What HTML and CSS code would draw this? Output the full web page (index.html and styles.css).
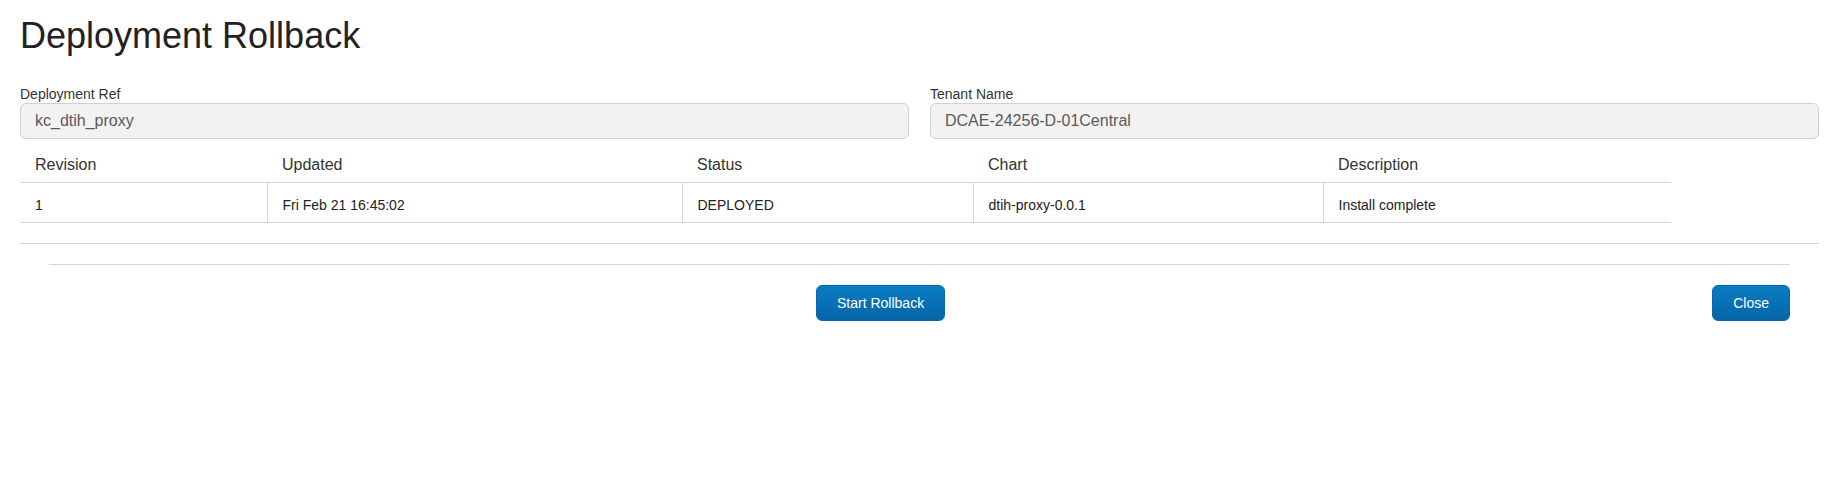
FILE: index.html
```html
<!DOCTYPE html>
<html lang="en">
<head>
<meta charset="utf-8">
<title>Deployment Rollback</title>
<link rel="stylesheet" href="styles.css">
</head>
<body>
<div class="page">
  <h1 class="title">Deployment Rollback</h1>
  <div class="fields">
    <div class="field">
      <label class="field-label">Deployment Ref</label>
      <div class="field-input">kc_dtih_proxy</div>
    </div>
    <div class="field">
      <label class="field-label">Tenant Name</label>
      <div class="field-input">DCAE-24256-D-01Central</div>
    </div>
  </div>
  <table class="revisions">
    <colgroup>
      <col class="c1"><col class="c2"><col class="c3"><col class="c4"><col class="c5">
    </colgroup>
    <thead>
      <tr><th>Revision</th><th>Updated</th><th>Status</th><th>Chart</th><th>Description</th></tr>
    </thead>
    <tbody>
      <tr><td>1</td><td>Fri Feb 21 16:45:02</td><td>DEPLOYED</td><td>dtih-proxy-0.0.1</td><td>Install complete</td></tr>
    </tbody>
  </table>
  <div class="divider"></div>
  <div class="footer">
    <div class="footer-center">
      <button class="btn">Start Rollback</button>
    </div>
    <button class="btn">Close</button>
  </div>
</div>
</body>
</html>
```
FILE: styles.css
```css
* { box-sizing: border-box; }
html, body { margin: 0; padding: 0; background: #fff; }
body {
  font-family: "Liberation Sans", Arial, sans-serif;
  color: #333;
}
.page { padding: 0 20px; }
.title {
  margin: 16px 0 0;
  font-size: 36px;
  line-height: 40px;
  font-weight: normal;
  color: #222;
}
.fields {
  margin-top: 29px;
  display: grid;
  grid-template-columns: 1fr 1fr;
  column-gap: 21px;
}
.field-label {
  display: block;
  font-size: 14px;
  line-height: 18px;
  color: #333;
}
.field-input {
  height: 36px;
  border: 1px solid #d0d0d0;
  border-radius: 6px;
  background: #f2f2f2;
  padding: 0 14px;
  font-size: 16px;
  line-height: 34px;
  color: #5a5a5a;
}
.revisions {
  border-collapse: collapse;
  table-layout: fixed;
  width: 1651px;
}
.revisions .c1 { width: 247px; }
.revisions .c2 { width: 415px; }
.revisions .c3 { width: 291px; }
.revisions .c4 { width: 350px; }
.revisions .c5 { width: 348px; }
.revisions th {
  text-align: left;
  font-weight: normal;
  font-size: 16px;
  line-height: 22px;
  padding: 15px 15px 6px;
  color: #333;
  border-bottom: 1px solid #d6d6d6;
}
.revisions td {
  font-size: 14px;
  line-height: 20px;
  padding: 12px 15px 7px;
  color: #222;
  border-bottom: 1px solid #d6d6d6;
}
.revisions td + td { border-left: 1px solid #d6d6d6; }
.divider {
  margin-top: 20px;
  border-top: 1px solid #d6d6d6;
}
.footer {
  margin: 20px 29px 0;
  padding-top: 20px;
  border-top: 1px solid #d6d6d6;
  display: flex;
  align-items: center;
}
.footer-center {
  flex: 1;
  text-align: center;
}
.btn {
  height: 36px;
  padding: 0 20px;
  border: 1px solid #0669ad;
  border-radius: 6px;
  background: linear-gradient(#0a7cc2, #0565a8);
  color: #fff;
  font-family: "Liberation Sans", Arial, sans-serif;
  font-size: 14px;
  line-height: 34px;
  cursor: pointer;
}
```
